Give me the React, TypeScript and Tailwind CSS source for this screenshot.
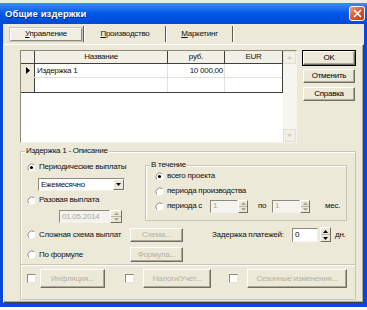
import React from 'react';

type Dir = 'up' | 'down';

const Tri = ({ dir, color = '#000' }: { dir: Dir; color?: string }) => (
  <svg width="5" height="3" viewBox="0 0 5 3" className="shrink-0">
    <path d={dir === 'up' ? 'M0 3L2.5 0L5 3Z' : 'M0 0L5 0L2.5 3Z'} fill={color} />
  </svg>
);

const Radio = ({ checked = false }: { checked?: boolean }) => (
  <svg width="9" height="9" viewBox="0 0 9 9" className="shrink-0">
    <circle cx="4.5" cy="4.5" r="4" fill="#fff" />
    <path d="M1.7 7.3A4 4 0 0 1 7.3 1.7" fill="none" stroke="#8d8a7c" strokeWidth="1" />
    {checked && <circle cx="4.5" cy="4.5" r="1.6" fill="#000" />}
  </svg>
);

const Check = () => (
  <div className="w-[9px] h-[9px] shrink-0 bg-white border border-t-[#8d8a7c] border-l-[#8d8a7c] border-r-[#e6e4da] border-b-[#e6e4da]" />
);

const Spin = ({ className = '', disabled = false }: { className?: string; disabled?: boolean }) => (
  <div className={`flex flex-col shrink-0 bg-[#ECE9D8] border border-t-white border-l-white border-r-[#716f64] border-b-[#716f64] ${className}`}>
    <div className="flex-1 flex items-center justify-center border-b border-b-[#b5b2a4]">
      <Tri dir="up" color={disabled ? '#aca899' : '#000'} />
    </div>
    <div className="flex-1 flex items-center justify-center">
      <Tri dir="down" color={disabled ? '#aca899' : '#000'} />
    </div>
  </div>
);

const Edit = ({ value, className = '', disabled = false }: { value: string; className?: string; disabled?: boolean }) => (
  <div
    className={`flex items-center pl-[2px] shrink-0 border border-t-[#8d8a7c] border-l-[#8d8a7c] border-r-[#f4f3ee] border-b-[#f4f3ee] ${
      disabled ? 'bg-[#f4f3ee] text-[#aca899]' : 'bg-white text-black'
    } ${className}`}
  >
    {value}
  </div>
);

const Btn = ({
  children,
  className = '',
  disabled = false,
}: {
  children: React.ReactNode;
  className?: string;
  disabled?: boolean;
}) => (
  <div
    className={`flex items-center justify-center shrink-0 bg-[#ECE9D8] border border-t-white border-l-white border-r-[#716f64] border-b-[#716f64] shadow-[inset_-1px_-1px_0_#aca899] ${
      disabled ? 'text-[#b5b2a4]' : 'text-black'
    } ${className}`}
  >
    {children}
  </div>
);

export default function App() {
  return (
    <div className="w-[367px] h-[310px] overflow-hidden bg-white font-['Liberation_Sans',Arial,sans-serif] text-[8px] tracking-[-0.25px] leading-none text-[#111]">
      <div className="h-[3px] bg-[#ebebeb]" />

      {/* Title bar */}
      <div className="h-[21px] flex items-center justify-between pl-[5px] pr-[2px] bg-gradient-to-b from-[#3a8cf6] via-[#0058e8] to-[#0049d6]">
        <span className="text-white font-bold text-[9.5px] tracking-[0.1px] [text-shadow:1px_1px_0_#0a2a80]">Общие издержки</span>
        <div className="w-[16px] h-[15px] rounded-[3px] border border-white flex items-center justify-center bg-gradient-to-br from-[#ec9676] via-[#d9582f] to-[#c0391a]">
          <svg width="9" height="9" viewBox="0 0 9 9">
            <path d="M1.5 1.5L7.5 7.5M7.5 1.5L1.5 7.5" stroke="#fff" strokeWidth="1.7" strokeLinecap="round" />
          </svg>
        </div>
      </div>

      {/* Window body */}
      <div className="h-[283px] flex flex-col bg-[#ECE9D8] border-x-[3px] border-b-[4px] border-[#0a46dc]">
        {/* Tabs */}
        <div className="h-[20px] flex items-center pl-[7px]">
          <div className="w-[72px] h-[13px] flex items-center justify-center bg-[#f1efe4] border border-t-white border-l-white border-r-[#8d8a7c] border-b-[#8d8a7c] shadow-[0_0_0_1px_#c9c6b6]">
            <span><span className="underline">У</span>правление</span>
          </div>
          <div className="ml-[1px] w-[2px] h-[16px] border-l border-l-[#5c5a50] border-r border-r-white" />
          <div className="w-[80px] flex items-center justify-center">
            <span><span className="underline">П</span>роизводство</span>
          </div>
          <div className="w-[2px] h-[16px] border-l border-l-[#5c5a50] border-r border-r-white" />
          <div className="w-[65px] flex items-center justify-center">
            <span><span className="underline">М</span>аркетинг</span>
          </div>
          <div className="w-[2px] h-[16px] border-l border-l-[#5c5a50] border-r border-r-white" />
        </div>

        {/* Page */}
        <div className="flex-1 flex flex-col pl-[16px] pt-[5px] border border-t-white border-l-white border-r-[#404040] border-b-[#404040] shadow-[inset_-1px_-1px_0_#aca899]">
          <div className="flex gap-[6px]">
            {/* Grid */}
            <div className="w-[277px] h-[93px] flex bg-white border border-t-[#8d8a7c] border-l-[#8d8a7c] border-r-[#f4f3ee] border-b-[#f4f3ee]">
              <div className="w-[262px] flex flex-col">
                <div className="flex flex-col border-r border-b border-[#404040]">
                  <div className="h-[13px] flex bg-[#f1efe6] border-b border-[#404040]">
                    <div className="w-[14px] border-r border-[#404040]" />
                    <div className="w-[133px] flex items-center justify-center border-r border-[#404040]">Название</div>
                    <div className="w-[57px] flex items-center justify-center border-r border-[#404040]">руб.</div>
                    <div className="flex-1 flex items-center justify-center">EUR</div>
                  </div>
                  <div className="h-[14px] flex border-b border-[#e4e2d8]">
                    <div className="w-[14px] flex items-center justify-center bg-[#ECE9D8] border-r border-[#404040]">
                      <svg width="4" height="7" viewBox="0 0 4 7">
                        <path d="M0 0L4 3.5L0 7Z" fill="#000" />
                      </svg>
                    </div>
                    <div className="w-[133px] flex items-center pl-[2px] border-r border-[#e4e2d8]">Издержка 1</div>
                    <div className="w-[57px] flex items-center justify-end pr-[1px] border-r border-[#e4e2d8]">10 000,00</div>
                    <div className="flex-1" />
                  </div>
                  <div className="h-[14px] flex">
                    <div className="w-[14px] bg-[#ECE9D8] border-r border-[#404040]" />
                    <div className="w-[133px] border-r border-[#e4e2d8]" />
                    <div className="w-[57px] border-r border-[#e4e2d8]" />
                    <div className="flex-1" />
                  </div>
                </div>
              </div>
              <div className="flex-1 flex flex-col justify-between bg-[#f6f5f0]">
                <div className="h-[13px] flex items-center justify-center bg-[#f1efe6] border border-[#e2e0d5]">
                  <Tri dir="up" color="#cfccbf" />
                </div>
                <div className="h-[13px] flex items-center justify-center bg-[#f1efe6] border border-[#e2e0d5]">
                  <Tri dir="down" color="#cfccbf" />
                </div>
              </div>
            </div>

            {/* Dialog buttons */}
            <div className="w-[52px] mt-[1px] flex flex-col gap-[4px]">
              <Btn className="h-[14px] outline outline-1 outline-black">OK</Btn>
              <Btn className="h-[14px]">Отменить</Btn>
              <Btn className="h-[14px]">Справка</Btn>
            </div>
          </div>

          {/* Group box */}
          <div className="relative mt-[8px] w-[336px] h-[149px] flex flex-col border border-[#c9c6b6] shadow-[inset_1px_1px_0_#fff]">
            <span className="absolute -top-[5px] left-[4px] px-[1px] bg-[#ECE9D8]">Издержка 1 - Описание</span>

            <div className="flex pt-[9px] pl-[6px]">
              <div className="w-[118px] flex flex-col">
                <div className="h-[12px] flex items-center gap-[3px]">
                  <Radio checked />
                  <span>Периодические выплаты</span>
                </div>
                <div className="mt-[5px] ml-[11px] w-[87px] h-[13px] flex bg-white border border-t-[#8d8a7c] border-l-[#8d8a7c] border-r-[#f4f3ee] border-b-[#f4f3ee]">
                  <div className="flex-1 flex items-center pl-[2px]">Ежемесячно</div>
                  <div className="w-[11px] flex items-center justify-center bg-[#ECE9D8] border border-t-white border-l-white border-r-[#716f64] border-b-[#716f64]">
                    <Tri dir="down" />
                  </div>
                </div>
                <div className="mt-[3px] h-[12px] flex items-center gap-[3px]">
                  <Radio />
                  <span>Разовая выплата</span>
                </div>
                <div className="mt-[4px] ml-[32px] h-[13px] flex">
                  <Edit value="01.05.2014" disabled className="w-[51px]" />
                  <Spin disabled className="w-[12px] h-[13px]" />
                </div>
              </div>

              {/* В течение */}
              <div className="relative mt-[4px] w-[202px] h-[56px] flex flex-col gap-[3px] pl-[9px] pt-[4px] border border-[#c9c6b6] shadow-[inset_1px_1px_0_#fff]">
                <span className="absolute -top-[5px] left-[4px] px-[1px] bg-[#ECE9D8]">В течение</span>
                <div className="h-[12px] flex items-center gap-[3px]">
                  <Radio checked />
                  <span>всего проекта</span>
                </div>
                <div className="h-[12px] flex items-center gap-[3px]">
                  <Radio />
                  <span>периода производства</span>
                </div>
                <div className="h-[12px] flex items-center">
                  <Radio />
                  <span className="ml-[3px] w-[43px]">периода с</span>
                  <Edit value="1" disabled className="w-[28px] h-[13px]" />
                  <Spin disabled className="w-[10px] h-[13px]" />
                  <span className="ml-[10px] w-[14px]">по</span>
                  <Edit value="1" disabled className="w-[28px] h-[13px]" />
                  <Spin disabled className="w-[10px] h-[13px]" />
                  <span className="ml-[15px]">мес.</span>
                </div>
              </div>
            </div>

            <div className="mt-[4px] h-[15px] flex items-center pl-[6px]">
              <div className="w-[103px] flex items-center gap-[3px]">
                <Radio />
                <span>Сложная схема выплат</span>
              </div>
              <Btn disabled className="w-[53px] h-[14px]">Схема...</Btn>
              <span className="ml-[29px] w-[80px]">Задержка платежей:</span>
              <Edit value="0" className="w-[26px] h-[14px]" />
              <Spin className="ml-[2px] w-[11px] h-[15px]" />
              <span className="ml-[4px]">дн.</span>
            </div>

            <div className="mt-[5px] h-[15px] flex items-center pl-[6px]">
              <div className="w-[103px] flex items-center gap-[3px]">
                <Radio />
                <span>По формуле</span>
              </div>
              <Btn disabled className="w-[53px] h-[15px]">Формула...</Btn>
            </div>

            <div className="mt-[2px] h-[2px] border-t border-t-[#c9c6b6] border-b border-b-white" />

            <div className="mt-[3px] h-[19px] flex items-center pl-[6px]">
              <Check />
              <Btn disabled className="ml-[4px] w-[65px] h-[19px]">Инфляция...</Btn>
              <div className="ml-[20px]"><Check /></div>
              <Btn disabled className="ml-[9px] w-[68px] h-[19px]">Налоги/Учет...</Btn>
              <div className="ml-[18px]"><Check /></div>
              <Btn disabled className="ml-[9px] w-[100px] h-[19px]">Сезонные изменения...</Btn>
            </div>
          </div>
        </div>
      </div>
    </div>
  );
}
